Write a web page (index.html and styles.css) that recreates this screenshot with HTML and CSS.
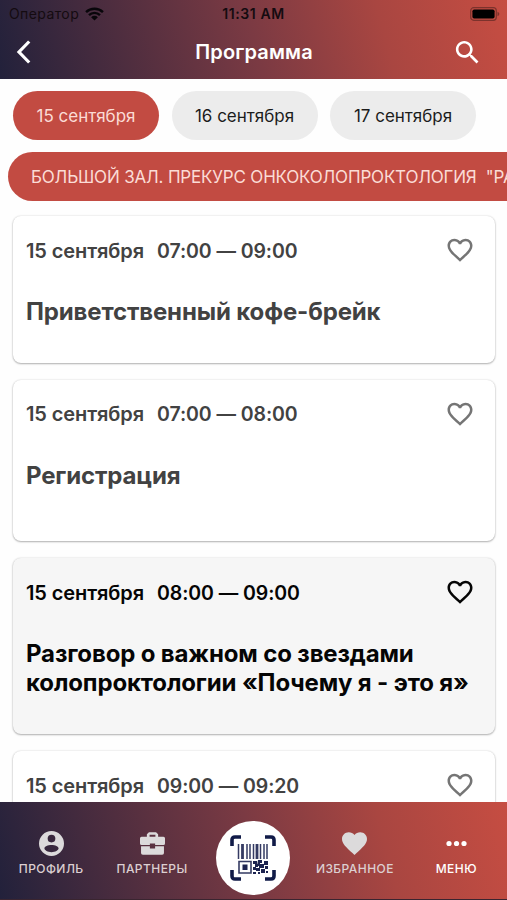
FILE: index.html
```html
<!DOCTYPE html>
<html lang="ru">
  <head>
    <meta charset="UTF-8" />
    <meta name="viewport" content="width=device-width, initial-scale=1.0" />
    <title>Программа</title>
    <link rel="stylesheet" href="styles.css">
  </head>
  <body>
    <svg class="sprite">
      <symbol id="heart-outline" viewBox="0 0 24 24">
        <path d="M16.5 3c-1.74 0-3.41.81-4.5 2.09C10.91 3.81 9.24 3 7.5 3 4.42 3 2 5.42 2 8.5c0 3.78 3.4 6.86 8.55 11.54L12 21.35l1.45-1.32C18.6 15.36 22 12.28 22 8.5 22 5.42 19.58 3 16.5 3zm-4.4 15.55l-.1.1-.1-.1C7.14 14.24 4 11.39 4 8.5 4 6.5 5.5 5 7.5 5c1.54 0 3.04.99 3.57 2.36h1.87C13.46 5.99 14.96 5 16.5 5c2 0 3.5 1.5 3.5 3.5 0 2.89-3.14 5.74-7.9 10.05z" />
      </symbol>
    </svg>

    <header class="header">
      <div class="status">
        <div class="carrier">
          <span>Оператор</span>
          <svg class="wifi" viewBox="0 0 18 13">
            <path d="M1 4.8a11.5 11.5 0 0 1 16 0M3.8 7.6a7.4 7.4 0 0 1 10.4 0" />
            <path class="dot" d="M9 12.6L5.8 9.5a4.6 4.6 0 0 1 6.4 0z" />
          </svg>
        </div>
        <span class="time">11:31 AM</span>
        <svg class="battery" viewBox="0 0 30 14">
          <rect class="case" x=".7" y=".7" width="25.6" height="12.6" rx="3" />
          <rect x="2.4" y="2.4" width="22.2" height="9.2" rx="1.8" />
          <path class="cap" d="M27.5 4.8c2.4.8 2.4 3.6 0 4.4z" />
        </svg>
      </div>
      <div class="toolbar">
        <svg class="back" viewBox="0 0 16 26"><path d="M13.2 2.5L3 13l10.2 10.5" /></svg>
        <h1>Программа</h1>
        <svg class="search" viewBox="0 0 24 24">
          <path d="M15.5 14h-.79l-.28-.27C15.41 12.59 16 11.11 16 9.5 16 5.91 13.09 3 9.5 3S3 5.91 3 9.5 5.91 16 9.5 16c1.61 0 3.09-.59 4.23-1.57l.27.28v.79l5 4.99L20.49 19l-4.99-5zm-6 0C7.01 14 5 11.99 5 9.5S7.01 5 9.5 5 14 7.01 14 9.5 11.99 14 9.5 14z" />
        </svg>
      </div>
    </header>

    <main class="content">
      <div class="days">
        <div class="chip active">15 сентября</div>
        <div class="chip">16 сентября</div>
        <div class="chip">17 сентября</div>
      </div>
      <div class="halls">
        <div class="chip active hall">БОЛЬШОЙ ЗАЛ. ПРЕКУРС ОНКОКОЛОПРОКТОЛОГИЯ&nbsp; "РА</div>
      </div>

      <div class="cards">
        <div class="card">
          <div class="card-top">
            <span class="date">15 сентября</span>
            <span class="hours">07:00 — 09:00</span>
            <svg class="like"><use href="#heart-outline" /></svg>
          </div>
          <h2>Приветственный кофе-брейк</h2>
        </div>

        <div class="card tall">
          <div class="card-top">
            <span class="date">15 сентября</span>
            <span class="hours">07:00 — 08:00</span>
            <svg class="like"><use href="#heart-outline" /></svg>
          </div>
          <h2>Регистрация</h2>
        </div>

        <div class="card current">
          <div class="card-top">
            <span class="date">15 сентября</span>
            <span class="hours">08:00 — 09:00</span>
            <svg class="like"><use href="#heart-outline" /></svg>
          </div>
          <h2>Разговор о важном со звездами<br>колопроктологии «Почему я - это я»</h2>
        </div>

        <div class="card">
          <div class="card-top">
            <span class="date">15 сентября</span>
            <span class="hours">09:00 — 09:20</span>
            <svg class="like"><use href="#heart-outline" /></svg>
          </div>
        </div>
      </div>
    </main>

    <nav class="tabs">
      <div class="tab">
        <svg viewBox="0 0 24 24">
          <path fill-rule="evenodd" d="M12 0a12 12 0 1 0 0 24a12 12 0 1 0 0-24zM12 3.6a3.7 3.7 0 1 1 0 7.4a3.7 3.7 0 1 1 0-7.4zM12 13.4c3.6 0 6.8 1.4 6.8 3.2S15.6 20.4 12 20.4s-6.8-2-6.8-3.8 3.2-3.2 6.8-3.2z" />
        </svg>
        <span>ПРОФИЛЬ</span>
      </div>
      <div class="tab">
        <svg viewBox="0 0 24 24">
          <path fill-rule="evenodd" d="M6.6 5.5V3.2l2-2h6.800l2 2v2.300h5.100A1.500 1.500 0 0 1 24 7v5a1.500 1.500 0 0 1-1.500 1.500h-8V12h-5v1.500h-8A1.500 1.500 0 0 1 0 12V7a1.500 1.500 0 0 1 1.500-1.500zM9.200 5.500h5.600V3.600H9.200z" />
          <path d="M1 14.600h8.500v2.200h5v-2.200H23V21a1.700 1.700 0 0 1-1.700 1.700H2.700A1.700 1.700 0 0 1 1 21z" />
        </svg>
        <span>ПАРТНЕРЫ</span>
      </div>
      <div class="scan">
        <svg viewBox="0 0 46 46">
          <path class="corner" d="M2 11V5q0-3 3-3h6M35 2h6q3 0 3 3v6M44 35v6q0 3-3 3h-6M11 44H5q-3 0-3-3v-6" />
          <path class="bars" d="M8.5 9v15M17 9v15M20 9v15M23.500 9v15M30.500 9v15M34 9v15M37 9v15" />
          <path class="bars wide" d="M12.500 9v15M27 9v15" />
          <path class="code" d="M9 26.500h12v11.500H9z" />
          <path d="M12.500 29.500h5v5.500h-5zM23 26h4v3h-4zM28 25h4v3h-2v3h-3zM34 26h4v4h-4zM25 29h3v3h-3zM29 29h5v4h-5zM35 31h3v3h-3zM23 32h3v3h-3zM26 33h4v3h-4zM31 34h4v4h-4zM23 37h3v2h-3zM36 36h2v2h-2zM28 37h2v2h-2z" />
        </svg>
      </div>
      <div class="tab">
        <svg viewBox="0 0 24 24">
          <path d="M12 23L10.3 21.4C4 15.7 0 12.1 0 7.7 0 4.1 2.9 1.3 6.5 1.3c2.1 0 4.2 1 5.5 2.6 1.3-1.6 3.4-2.6 5.5-2.6C21.1 1.3 24 4.1 24 7.7c0 4.4-4 8-10.3 13.7z" />
        </svg>
        <span>ИЗБРАННОЕ</span>
      </div>
      <div class="tab selected">
        <svg viewBox="0 0 24 24">
          <circle cx="4.8" cy="12" r="2.5" />
          <circle cx="12" cy="12" r="2.5" />
          <circle cx="19.2" cy="12" r="2.5" />
        </svg>
        <span>МЕНЮ</span>
      </div>
    </nav>
  </body>
</html>
```
FILE: styles.css
```css
* {
  margin: 0;
  padding: 0;
  box-sizing: border-box;
}
body {
  display: flex;
  flex-direction: column;
  height: 100vh;
  overflow: hidden;
  background: #fefefe;
  font-family: Inter, "Liberation Sans", sans-serif;
}
svg {
  display: block;
  flex-shrink: 0;
}
.sprite {
  display: none;
}

/* header */
.header {
  flex-shrink: 0;
  height: 79px;
  background: linear-gradient(75deg, #22213b, #7b3a43 50%, #a94641 75%, #c64d42);
}
.status {
  display: grid;
  grid-template-columns: 1fr auto 1fr;
  align-items: center;
  height: 27px;
  padding: 0 7px 0 9px;
  font-size: 14px;
  color: #140b10;
}
.carrier {
  display: flex;
  align-items: center;
  gap: 6px;
  letter-spacing: 0.4px;
}
.wifi {
  width: 19px;
  height: 14px;
  fill: none;
  stroke: #08060a;
  stroke-width: 2.3;
}
.wifi .dot {
  fill: #08060a;
  stroke: none;
}
.time {
  margin-right: 2px;
  font-weight: 600;
  letter-spacing: 0.6px;
}
.battery {
  justify-self: end;
  width: 30px;
  height: 14px;
}
.battery .case {
  fill: none;
  stroke: #7c322c;
  stroke-width: 1.2;
}
.battery .cap {
  fill: #7c322c;
}
.toolbar {
  display: grid;
  grid-template-columns: 1fr auto 1fr;
  align-items: center;
  height: 50px;
  padding: 0 24px 0 16px;
  color: white;
}
.toolbar h1 {
  margin-left: 9px;
  font-size: 20px;
  font-weight: 600;
  letter-spacing: 0.15px;
}
.back {
  width: 16px;
  height: 26px;
  fill: none;
  stroke: white;
  stroke-width: 3.2;
}
.search {
  justify-self: end;
  width: 31px;
  height: 31px;
  fill: white;
}

/* filters */
.content {
  flex: 1;
  min-height: 0;
  overflow: hidden;
}
.days {
  display: flex;
  gap: 13px;
  padding: 12px 13px 0;
}
.chip {
  display: flex;
  align-items: center;
  justify-content: center;
  width: 146px;
  height: 49px;
  border-radius: 25px;
  background: #ececec;
  color: #1c1c1c;
  font-size: 17px;
  white-space: nowrap;
}
.days .chip + .chip {
  margin-left: -0.5px;
}
.chip.active {
  background: #c24b42;
  color: #fbdcd6;
}
.halls {
  padding: 12px 0 0 8px;
}
.chip.hall {
  justify-content: flex-start;
  width: 600px;
  padding-left: 23px;
  letter-spacing: -0.18px;
}

/* schedule */
.cards {
  display: flex;
  flex-direction: column;
  gap: 17px;
  padding: 15px 12px 0 13px;
}
.card {
  height: 146.5px;
  flex-shrink: 0;
  padding: 17px 20px 0 13px;
  border-radius: 8px;
  background: white;
  box-shadow: 0 1px 2px rgba(0, 0, 0, 0.28), 0 0 2px rgba(0, 0, 0, 0.16);
  color: #424242;
}
.card.tall {
  height: 161.5px;
}
.card.current {
  height: 176px;
  background: #f6f6f6;
  color: #050505;
}
.card-top {
  display: flex;
  align-items: center;
  height: 35px;
  font-size: 20px;
  font-weight: 600;
}
.date {
  width: 131px;
  letter-spacing: -0.1px;
}
.hours {
  font-size: 19.5px;
  letter-spacing: -0.08px;
}
.like {
  width: 30px;
  height: 30px;
  margin: -1px 0 0 auto;
  fill: #757575;
}
.current .like {
  fill: #050505;
}
.card h2 {
  margin-top: 29px;
  font-size: 24px;
  font-weight: 700;
  line-height: 29px;
  letter-spacing: -0.14px;
  white-space: nowrap;
}

/* bottom tabs */
.tabs {
  display: grid;
  grid-template-columns: repeat(5, 1fr);
  flex-shrink: 0;
  height: 98px;
  border-bottom: 1px solid #3a2530;
  background: linear-gradient(75deg, #22213b, #7b3a43 50%, #a94641 75%, #c64d42);
}
.tab {
  display: flex;
  flex-direction: column;
  align-items: center;
  gap: 5px;
  padding-top: 29px;
  color: #dccfd1;
  font-size: 12px;
  font-weight: 500;
  letter-spacing: 0.45px;
}
.tab:first-child {
  padding-left: 1px;
}
.tab svg {
  width: 25px;
  height: 25px;
  fill: #dcdadb;
}
.tab.selected {
  color: white;
}
.tab.selected svg {
  fill: white;
}
.scan {
  display: flex;
  align-items: center;
  justify-content: center;
  justify-self: center;
  width: 74px;
  height: 74px;
  margin-top: 19px;
  border-radius: 50%;
  background: white;
}
.scan svg {
  width: 46px;
  height: 46px;
  fill: #1c2350;
}
.scan .corner {
  fill: none;
  stroke: #111b48;
  stroke-width: 3.6;
}
.scan .bars {
  fill: none;
  stroke: #353b63;
  stroke-width: 1.5;
}
.scan .bars.wide {
  stroke-width: 2.8;
}
.scan .code {
  fill: none;
  stroke: #353b63;
  stroke-width: 1.6;
}
```
